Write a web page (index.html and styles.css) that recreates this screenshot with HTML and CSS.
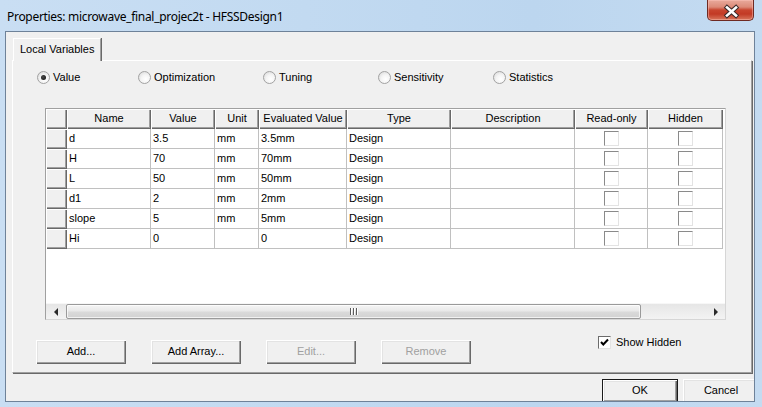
FILE: index.html
```html
<!DOCTYPE html>
<html>
<head>
<meta charset="utf-8">
<link rel="stylesheet" href="styles.css">
</head>
<body>
<div class="window">
  <div class="titlebar">
    <div class="title">Properties: microwave_final_projec2t - HFSSDesign1</div>
    <div class="close">
      <svg width="46" height="21" viewBox="0 0 46 21">
        <path d="M19 7.5 L28 15.5 M28 7.5 L19 15.5" stroke="#3a2a2a" stroke-width="4.6" stroke-linecap="square" fill="none"/>
        <path d="M19 7.5 L28 15.5 M28 7.5 L19 15.5" stroke="#ffffff" stroke-width="2.6" stroke-linecap="square" fill="none"/>
      </svg>
    </div>
  </div>
  <div class="client">
    <div class="tabs">
      <div class="tab">Local Variables</div>
    </div>
    <div class="panel">
      <div class="radios">
        <div class="radio-item w101"><span class="radio checked"></span><span>Value</span></div>
        <div class="radio-item w125"><span class="radio"></span><span>Optimization</span></div>
        <div class="radio-item w115"><span class="radio"></span><span>Tuning</span></div>
        <div class="radio-item w115"><span class="radio"></span><span>Sensitivity</span></div>
        <div class="radio-item"><span class="radio"></span><span>Statistics</span></div>
      </div>
      <div class="grid">
        <div class="row head">
          <div class="hcell"></div>
          <div class="hcell">Name</div>
          <div class="hcell">Value</div>
          <div class="hcell">Unit</div>
          <div class="hcell">Evaluated Value</div>
          <div class="hcell">Type</div>
          <div class="hcell">Description</div>
          <div class="hcell">Read-only</div>
          <div class="hcell">Hidden</div>
        </div>
        <div class="row">
          <div class="rhead"></div><div class="cell">d</div><div class="cell">3.5</div><div class="cell">mm</div><div class="cell">3.5mm</div><div class="cell">Design</div><div class="cell"></div><div class="cell ck"><span class="box"></span></div><div class="cell ck"><span class="box"></span></div>
        </div>
        <div class="row">
          <div class="rhead"></div><div class="cell">H</div><div class="cell">70</div><div class="cell">mm</div><div class="cell">70mm</div><div class="cell">Design</div><div class="cell"></div><div class="cell ck"><span class="box"></span></div><div class="cell ck"><span class="box"></span></div>
        </div>
        <div class="row">
          <div class="rhead"></div><div class="cell">L</div><div class="cell">50</div><div class="cell">mm</div><div class="cell">50mm</div><div class="cell">Design</div><div class="cell"></div><div class="cell ck"><span class="box"></span></div><div class="cell ck"><span class="box"></span></div>
        </div>
        <div class="row">
          <div class="rhead"></div><div class="cell">d1</div><div class="cell">2</div><div class="cell">mm</div><div class="cell">2mm</div><div class="cell">Design</div><div class="cell"></div><div class="cell ck"><span class="box"></span></div><div class="cell ck"><span class="box"></span></div>
        </div>
        <div class="row">
          <div class="rhead"></div><div class="cell">slope</div><div class="cell">5</div><div class="cell">mm</div><div class="cell">5mm</div><div class="cell">Design</div><div class="cell"></div><div class="cell ck"><span class="box"></span></div><div class="cell ck"><span class="box"></span></div>
        </div>
        <div class="row">
          <div class="rhead"></div><div class="cell">Hi</div><div class="cell">0</div><div class="cell"></div><div class="cell">0</div><div class="cell">Design</div><div class="cell"></div><div class="cell ck"><span class="box"></span></div><div class="cell ck"><span class="box"></span></div>
        </div>
        <div class="grid-fill"></div>
        <div class="hscroll">
          <div class="sb-btn"><span class="arrow-left"></span></div>
          <div class="thumb"><span class="grip"></span><span class="grip"></span><span class="grip"></span></div>
          <div class="track"></div>
          <div class="sb-btn right"><span class="arrow-right"></span></div>
        </div>
      </div>
      <div class="actions">
        <div class="btn">Add...</div>
        <div class="btn">Add Array...</div>
        <div class="btn disabled">Edit...</div>
        <div class="btn disabled last">Remove</div>
        <div class="show-hidden">
          <span class="cbox">
            <svg width="11" height="11" viewBox="0 0 11 11"><path d="M2 5 L4.3 7.5 L9 2.5" stroke="#000" stroke-width="2" fill="none"/></svg>
          </span>
          <span>Show Hidden</span>
        </div>
      </div>
    </div>
    <div class="footer">
      <div class="btn default">OK</div>
      <div class="btn cancel">Cancel</div>
    </div>
  </div>
</div>
</body>
</html>
```

FILE: styles.css
```css
* { box-sizing: border-box; }
html, body { margin: 0; padding: 0; }
body {
  width: 762px;
  height: 407px;
  overflow: hidden;
  font-family: "Liberation Sans", Arial, sans-serif;
  font-size: 11px;
  color: #000;
}
.window {
  width: 762px;
  height: 407px;
  background: linear-gradient(90deg, #c9def3 0%, #c2daf1 40%, #bcd6ef 70%, #c4dbf1 100%);
  display: flex;
  flex-direction: column;
}
.titlebar {
  height: 31px;
  flex: none;
  display: flex;
  justify-content: space-between;
  align-items: flex-start;
  padding-left: 7px;
  padding-right: 8px;
}
.title {
  font-family: "Noto Sans", sans-serif;
  font-size: 12px;
  line-height: 16px;
  margin-top: 9px;
  color: #000;
  letter-spacing: -0.3px;
}
.close {
  width: 47px;
  height: 21px;
  border: 1px solid #6e2a22;
  border-top: none;
  border-radius: 0 0 5px 5px;
  background: linear-gradient(180deg, #e9aa9c 0%, #dc8a78 35%, #c8452f 50%, #c23a25 70%, #d8765c 100%);
  box-shadow: inset 0 0 0 1px rgba(255,200,190,0.45);
  overflow: hidden;
}
.close svg { display: block; }
.client {
  margin-left: 5px;
  width: 750px;
  height: 371px;
  border: 1px solid #6e8299;
  background: #f0f0f0;
  overflow: hidden;
  flex: none;
}
.tabs {
  padding: 6px 0 0 7px;
  display: flex;
}
.tab {
  position: relative;
  z-index: 1;
  width: 88px;
  height: 23px;
  margin-bottom: -1px;
  background: #f0f0f0;
  border-top: 1px solid #fff;
  border-left: 1px solid #fff;
  border-right: 1px solid #a0a0a0;
  box-shadow: 1px 0 0 #696969;
  padding-left: 6px;
  line-height: 20px;
}
.panel {
  margin-left: 6px;
  width: 740px;
  height: 313px;
  border-top: 1px solid #fff;
  border-left: 1px solid #fff;
  border-right: 1px solid #a0a0a0;
  border-bottom: 1px solid #a0a0a0;
  box-shadow: 1px 1px 0 #696969;
  padding-top: 10px;
}
.radios {
  display: flex;
  padding-left: 24px;
  height: 13px;
  line-height: 13px;
}
.radio-item { display: flex; align-items: center; }
.w101 { width: 101px; }
.w125 { width: 125px; }
.w115 { width: 115px; }
.radio {
  width: 13px;
  height: 13px;
  border-radius: 50%;
  border: 1px solid #a2a2a2;
  background: radial-gradient(circle at 60% 65%, #ffffff 0%, #f4f4f4 45%, #d4d4d4 100%);
  margin-right: 3px;
  display: flex;
  align-items: center;
  justify-content: center;
}
.radio.checked::after {
  content: "";
  width: 5px;
  height: 5px;
  border-radius: 50%;
  background: radial-gradient(circle at 40% 40%, #4a4a4a, #0c0c0c);
}
.grid {
  margin-top: 24px;
  margin-left: 32px;
  width: 681px;
  height: 212px;
  border: 1px solid;
  border-color: #a0a0a0 #d6d6d6 #d6d6d6 #a0a0a0;
  background: #fff;
  display: flex;
  flex-direction: column;
}
.row {
  display: grid;
  grid-template-columns: 21px 84px 64px 44px 88px 104px 124px 73px 75px;
  height: 20px;
  flex: none;
}
.hcell, .rhead {
  background: #f0f0f0;
  box-shadow: inset 1px 1px 0 #fff, inset -1px -1px 0 #696969, inset -2px -2px 0 #a0a0a0;
}
.hcell {
  text-align: center;
  line-height: 19px;
  white-space: nowrap;
  overflow: hidden;
}
.cell {
  border-right: 1px solid #c0c0c0;
  border-bottom: 1px solid #c0c0c0;
  padding-left: 2px;
  line-height: 19px;
  white-space: nowrap;
  overflow: hidden;
}
.cell.ck {
  display: flex;
  justify-content: center;
  align-items: flex-start;
  padding-left: 0;
  padding-top: 2px;
}
.box {
  width: 15px;
  height: 15px;
  border: 1px solid;
  border-color: #8a8a8a #e3e3e3 #e3e3e3 #8a8a8a;
  background: #fff;
}
.grid-fill { flex: 1; }
.hscroll {
  height: 16px;
  flex: none;
  display: flex;
  background: linear-gradient(180deg, #e6e6e6, #f3f3f3);
  border-top: 1px solid #f7f7f7;
}
.sb-btn {
  width: 20px;
  display: flex;
  align-items: center;
  justify-content: center;
}
.sb-btn.right { width: 19px; }
.arrow-left {
  width: 0; height: 0;
  border-top: 4px solid transparent;
  border-bottom: 4px solid transparent;
  border-right: 4px solid #2a2a2a;
}
.arrow-right {
  width: 0; height: 0;
  border-top: 4px solid transparent;
  border-bottom: 4px solid transparent;
  border-left: 4px solid #2a2a2a;
}
.thumb {
  width: 575px;
  border: 1px solid #9a9a9a;
  border-radius: 2px;
  background: linear-gradient(180deg, #f5f5f5 0%, #e9e9e9 45%, #dadada 55%, #d2d2d2 100%);
  box-shadow: inset 0 0 0 1px rgba(255,255,255,0.7);
  display: flex;
  align-items: center;
  justify-content: center;
  gap: 2px;
}
.grip {
  width: 1px;
  height: 7px;
  background: #5c5c5c;
  box-shadow: 1px 0 0 #fff;
}
.track { flex: 1; }
.actions {
  display: flex;
  align-items: flex-start;
  margin-top: 16px;
  margin-left: 23px;
}
.btn {
  width: 90px;
  height: 24px;
  background: #f0f0f0;
  box-shadow: inset 1px 1px 0 #fff, inset -1px -1px 0 #696969, inset -2px -2px 0 #a0a0a0, inset 2px 2px 0 #e3e3e3;
  text-align: center;
  line-height: 22px;
  flex: none;
}
.actions .btn { margin-top: 4px; margin-right: 25px; }
.actions .btn.last { margin-right: 0; }
.btn.disabled { color: #a0a0a0; }
.show-hidden {
  margin-left: 127px;
  display: flex;
  align-items: center;
  height: 13px;
  line-height: 13px;
}
.cbox {
  width: 13px;
  height: 13px;
  border: 1px solid;
  border-color: #6c6c6c #e3e3e3 #e3e3e3 #6c6c6c;
  background: #fff;
  margin-right: 5px;
  display: flex;
  align-items: center;
  justify-content: center;
}
.cbox svg { display: block; }
.footer {
  display: flex;
  margin-top: 6px;
  padding-left: 596px;
  gap: 5px;
}
.footer .btn { width: 76px; }
.btn.default {
  border: 1px solid #1a1a1a;
  line-height: 20px;
}
```
